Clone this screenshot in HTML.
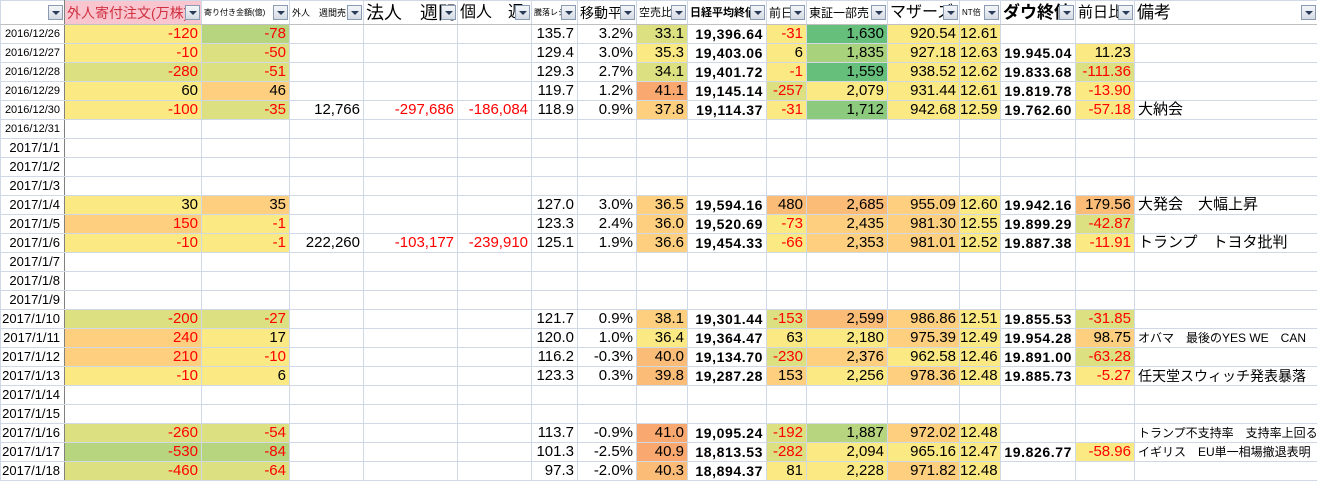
<!DOCTYPE html>
<html><head><meta charset="utf-8"><style>
body{margin:0;width:1317px;height:479px;overflow:hidden;background:#fff;font-family:"Liberation Sans","Noto Sans CJK JP",sans-serif;}
table{border-collapse:collapse;table-layout:fixed;position:absolute;left:0;top:0;width:1317px;}
td{border:1px solid #d0d7e5;height:18px;padding:0 3px 0 0;text-align:right;font-size:15px;line-height:18px;white-space:nowrap;overflow:hidden;color:#000;}
tr.h td{height:23px;text-align:left;font-size:17px;position:relative;padding:0 0 0 2px;border-bottom:1px solid #c0c0c0}
td.d{font-size:13px;border-right:1px solid #808080;padding-right:4px}
td.d2{font-size:11px}
.r{color:#f00}
.b{font-weight:bold;font-size:14px;letter-spacing:0.6px}
.Y{background:#fbe983}.O{background:#fdcf7e}.OO{background:#f9a86f}.O2{background:#fbbc78}
.YG{background:#dde081}.LG{background:#b7d57e}.G{background:#66bf7b}.G2{background:#8ccb7d}.LG2{background:#a9d27d}
.btn{position:absolute;right:1px;top:4px;width:15px;height:15px;border:1px solid #8a9ab0;background:linear-gradient(#f4f6f9,#d5dbe4);box-sizing:border-box}
.btn:after{content:"";position:absolute;left:3px;top:5px;border-left:4px solid transparent;border-right:4px solid transparent;border-top:4px solid #2a3a5a}
td.note{text-align:left;font-size:15px;padding-left:3px}
td.sm{font-size:12px}
</style></head><body>
<table>
<colgroup><col style="width:64px"><col style="width:137px"><col style="width:88px"><col style="width:74px"><col style="width:94px"><col style="width:74px"><col style="width:46px"><col style="width:59px"><col style="width:51px"><col style="width:79px"><col style="width:40px"><col style="width:81px"><col style="width:72px"><col style="width:41px"><col style="width:75px"><col style="width:59px"><col style="width:183px"></colgroup>
<tr class="h"><td style="border-right:1px solid #808080"><span class="btn"></span></td><td style="background:#f9c6d0;color:#d03040;font-size:14px">外人寄付注文(万株)<span class="btn"></span></td><td style="font-size:8px">寄り付き金額(億)<span class="btn"></span></td><td style="font-size:9px">外人　週間売<span class="btn"></span></td><td style="font-size:18px">法人　週間<span class="btn"></span></td><td style="font-size:16px">個人　週<span class="btn"></span></td><td style="font-size:8px">騰落レシオ<span class="btn"></span></td><td style="font-size:14px">移動平<span class="btn"></span></td><td style="font-size:11px">空売比<span class="btn"></span></td><td style="font-size:11px;font-weight:bold">日経平均終値<span class="btn"></span></td><td style="font-size:12px">前日<span class="btn"></span></td><td style="font-size:12px">東証一部売<span class="btn"></span></td><td style="font-size:16px">マザーズ<span class="btn"></span></td><td style="font-size:8px">NT倍<span class="btn"></span></td><td style="font-size:17px;font-weight:bold">ダウ終値<span class="btn"></span></td><td style="font-size:15px">前日比<span class="btn"></span></td><td style="font-size:17px">備考<span class="btn"></span></td></tr>
<tr><td class="d d2">2016/12/26</td><td class="Y r">-120</td><td class="LG r">-78</td><td></td><td></td><td></td><td>135.7</td><td>3.2%</td><td class="YG">33.1</td><td class="b">19,396.64</td><td class="Y r">-31</td><td class="G">1,630</td><td class="Y">920.54</td><td class="Y">12.61</td><td></td><td></td><td></td></tr>
<tr><td class="d d2">2016/12/27</td><td class="Y r">-10</td><td class="YG r">-50</td><td></td><td></td><td></td><td>129.4</td><td>3.0%</td><td class="Y">35.3</td><td class="b">19,403.06</td><td class="Y">6</td><td class="LG2">1,835</td><td class="Y">927.18</td><td class="Y">12.63</td><td class="b">19.945.04</td><td class="Y">11.23</td><td></td></tr>
<tr><td class="d d2">2016/12/28</td><td class="YG r">-280</td><td class="YG r">-51</td><td></td><td></td><td></td><td>129.3</td><td>2.7%</td><td class="YG">34.1</td><td class="b">19,401.72</td><td class="Y r">-1</td><td class="G">1,559</td><td class="Y">938.52</td><td class="Y">12.62</td><td class="b">19.833.68</td><td class="YG r">-111.36</td><td></td></tr>
<tr><td class="d d2">2016/12/29</td><td class="Y">60</td><td class="O">46</td><td></td><td></td><td></td><td>119.7</td><td>1.2%</td><td class="OO">41.1</td><td class="b">19,145.14</td><td class="YG r">-257</td><td class="Y">2,079</td><td class="Y">931.44</td><td class="Y">12.61</td><td class="b">19.819.78</td><td class="Y r">-13.90</td><td></td></tr>
<tr><td class="d d2">2016/12/30</td><td class="Y r">-100</td><td class="YG r">-35</td><td>12,766</td><td class="r">-297,686</td><td class="r">-186,084</td><td>118.9</td><td>0.9%</td><td class="O">37.8</td><td class="b">19,114.37</td><td class="Y r">-31</td><td class="G2">1,712</td><td class="Y">942.68</td><td class="Y">12.59</td><td class="b">19.762.60</td><td class="Y r">-57.18</td><td class="note">大納会</td></tr>
<tr><td class="d d2">2016/12/31</td><td></td><td></td><td></td><td></td><td></td><td></td><td></td><td></td><td></td><td></td><td></td><td></td><td></td><td></td><td></td><td></td></tr>
<tr><td class="d">2017/1/1</td><td></td><td></td><td></td><td></td><td></td><td></td><td></td><td></td><td></td><td></td><td></td><td></td><td></td><td></td><td></td><td></td></tr>
<tr><td class="d">2017/1/2</td><td></td><td></td><td></td><td></td><td></td><td></td><td></td><td></td><td></td><td></td><td></td><td></td><td></td><td></td><td></td><td></td></tr>
<tr><td class="d">2017/1/3</td><td></td><td></td><td></td><td></td><td></td><td></td><td></td><td></td><td></td><td></td><td></td><td></td><td></td><td></td><td></td><td></td></tr>
<tr><td class="d">2017/1/4</td><td class="Y">30</td><td class="O">35</td><td></td><td></td><td></td><td>127.0</td><td>3.0%</td><td class="O">36.5</td><td class="b">19,594.16</td><td class="O2">480</td><td class="O2">2,685</td><td class="O">955.09</td><td class="Y">12.60</td><td class="b">19.942.16</td><td class="O2">179.56</td><td class="note">大発会　大幅上昇</td></tr>
<tr><td class="d">2017/1/5</td><td class="O r">150</td><td class="Y r">-1</td><td></td><td></td><td></td><td>123.3</td><td>2.4%</td><td class="O">36.0</td><td class="b">19,520.69</td><td class="Y r">-73</td><td class="O">2,435</td><td class="O">981.30</td><td class="Y">12.55</td><td class="b">19.899.29</td><td class="YG r">-42.87</td><td></td></tr>
<tr><td class="d">2017/1/6</td><td class="Y r">-10</td><td class="Y r">-1</td><td>222,260</td><td class="r">-103,177</td><td class="r">-239,910</td><td>125.1</td><td>1.9%</td><td class="O">36.6</td><td class="b">19,454.33</td><td class="Y r">-66</td><td class="O">2,353</td><td class="O">981.01</td><td class="Y">12.52</td><td class="b">19.887.38</td><td class="Y r">-11.91</td><td class="note">トランプ　トヨタ批判</td></tr>
<tr><td class="d">2017/1/7</td><td></td><td></td><td></td><td></td><td></td><td></td><td></td><td></td><td></td><td></td><td></td><td></td><td></td><td></td><td></td><td></td></tr>
<tr><td class="d">2017/1/8</td><td></td><td></td><td></td><td></td><td></td><td></td><td></td><td></td><td></td><td></td><td></td><td></td><td></td><td></td><td></td><td></td></tr>
<tr><td class="d">2017/1/9</td><td></td><td></td><td></td><td></td><td></td><td></td><td></td><td></td><td></td><td></td><td></td><td></td><td></td><td></td><td></td><td></td></tr>
<tr><td class="d">2017/1/10</td><td class="YG r">-200</td><td class="YG r">-27</td><td></td><td></td><td></td><td>121.7</td><td>0.9%</td><td class="O">38.1</td><td class="b">19,301.44</td><td class="YG r">-153</td><td class="O2">2,599</td><td class="O">986.86</td><td class="Y">12.51</td><td class="b">19.855.53</td><td class="YG r">-31.85</td><td></td></tr>
<tr><td class="d">2017/1/11</td><td class="O r">240</td><td class="Y">17</td><td></td><td></td><td></td><td>120.0</td><td>1.0%</td><td class="Y">36.4</td><td class="b">19,364.47</td><td class="Y">63</td><td class="Y">2,180</td><td class="O">975.39</td><td class="Y">12.49</td><td class="b">19.954.28</td><td class="O">98.75</td><td class="note sm">オバマ　最後のYES WE　CAN</td></tr>
<tr><td class="d">2017/1/12</td><td class="O r">210</td><td class="Y r">-10</td><td></td><td></td><td></td><td>116.2</td><td>-0.3%</td><td class="O2">40.0</td><td class="b">19,134.70</td><td class="YG r">-230</td><td class="O">2,376</td><td class="Y">962.58</td><td class="Y">12.46</td><td class="b">19.891.00</td><td class="YG r">-63.28</td><td></td></tr>
<tr><td class="d">2017/1/13</td><td class="Y r">-10</td><td class="Y">6</td><td></td><td></td><td></td><td>123.3</td><td>0.3%</td><td class="O2">39.8</td><td class="b">19,287.28</td><td class="O">153</td><td class="Y">2,256</td><td class="O">978.36</td><td class="Y">12.48</td><td class="b">19.885.73</td><td class="Y r">-5.27</td><td class="note" style="font-size:14px">任天堂スウィッチ発表暴落</td></tr>
<tr><td class="d">2017/1/14</td><td></td><td></td><td></td><td></td><td></td><td></td><td></td><td></td><td></td><td></td><td></td><td></td><td></td><td></td><td></td><td></td></tr>
<tr><td class="d">2017/1/15</td><td></td><td></td><td></td><td></td><td></td><td></td><td></td><td></td><td></td><td></td><td></td><td></td><td></td><td></td><td></td><td></td></tr>
<tr><td class="d">2017/1/16</td><td class="YG r">-260</td><td class="YG r">-54</td><td></td><td></td><td></td><td>113.7</td><td>-0.9%</td><td class="OO">41.0</td><td class="b">19,095.24</td><td class="YG r">-192</td><td class="LG">1,887</td><td class="O">972.02</td><td class="Y">12.48</td><td></td><td></td><td class="note sm">トランプ不支持率　支持率上回る</td></tr>
<tr><td class="d">2017/1/17</td><td class="LG r">-530</td><td class="LG r">-84</td><td></td><td></td><td></td><td>101.3</td><td>-2.5%</td><td class="OO">40.9</td><td class="b">18,813.53</td><td class="YG r">-282</td><td class="Y">2,094</td><td class="Y">965.16</td><td class="Y">12.47</td><td class="b">19.826.77</td><td class="Y r">-58.96</td><td class="note sm">イギリス　EU単一相場撤退表明</td></tr>
<tr><td class="d">2017/1/18</td><td class="YG r">-460</td><td class="YG r">-64</td><td></td><td></td><td></td><td>97.3</td><td>-2.0%</td><td class="O2">40.3</td><td class="b">18,894.37</td><td class="Y">81</td><td class="Y">2,228</td><td class="O">971.82</td><td class="Y">12.48</td><td></td><td></td><td></td></tr>
</table>
</body></html>
